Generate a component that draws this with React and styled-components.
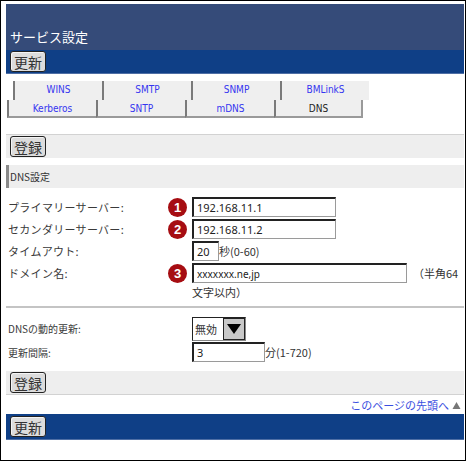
import React from "react";
import styled, { createGlobalStyle } from "styled-components";

const GlobalStyle = createGlobalStyle`
  html, body {
    margin: 0;
    padding: 0;
    background: #ffffff;
  }
  body {
    font-family: "Noto Sans CJK JP", "DejaVu Sans", sans-serif;
  }
`;

const TABS_TOP = ["WINS", "SMTP", "SNMP", "BMLinkS"];
const TABS_BOTTOM = ["Kerberos", "SNTP", "mDNS", "DNS"];

function App() {
  return (
    <>
      <GlobalStyle />
      <Frame>
        <Header>
          <Title>サービス設定</Title>
        </Header>
        <BlueBand>
          <PlainButton>更新</PlainButton>
        </BlueBand>

        <Tabs>
          <TabRow offset={7}>
            {TABS_TOP.map((t) => (
              <Tab key={t}>{t}</Tab>
            ))}
          </TabRow>
          <TabRow offset={1} bottom>
            {TABS_BOTTOM.map((t) => (
              <Tab key={t} active={t === "DNS"} bottom>
                {t}
              </Tab>
            ))}
          </TabRow>
        </Tabs>

        <ActionBar top>
          <PlainButton>登録</PlainButton>
        </ActionBar>

        <SectionTitle>DNS設定</SectionTitle>

        <Form>
          <Row>
            <Label>プライマリーサーバー:</Label>
            <BadgeCell>
              <Badge>1</Badge>
            </BadgeCell>
            <TextInput width={144} defaultValue="192.168.11.1" />
          </Row>
          <Row>
            <Label>セカンダリーサーバー:</Label>
            <BadgeCell>
              <Badge>2</Badge>
            </BadgeCell>
            <TextInput width={144} defaultValue="192.168.11.2" />
          </Row>
          <Row>
            <Label>タイムアウト:</Label>
            <BadgeCell />
            <TextInput width={27} defaultValue="20" />
            <Unit>秒(0-60)</Unit>
          </Row>
          <Row tall>
            <Label>ドメイン名:</Label>
            <BadgeCell>
              <Badge>3</Badge>
            </BadgeCell>
            <TextInput width={215} small defaultValue="xxxxxxx.ne,jp" />
            <Note>（半角64</Note>
          </Row>
          <Wrapped>文字以内）</Wrapped>
        </Form>

        <Rule />

        <Form>
          <Row select>
            <Label small>DNSの動的更新:</Label>
            <BadgeCell />
            <Select>
              <SelectValue>無効</SelectValue>
              <SelectArrow>
                <svg width="14" height="10" viewBox="0 0 14 10">
                  <polygon points="0,0 14,0 7,10" fill="#000" />
                </svg>
              </SelectArrow>
            </Select>
          </Row>
          <Row>
            <Label small>更新間隔:</Label>
            <BadgeCell />
            <TextInput width={73} defaultValue="3" />
            <Unit>分(1-720)</Unit>
          </Row>
        </Form>

        <ActionBar bottomLine>
          <PlainButton>登録</PlainButton>
        </ActionBar>

        <TopLinkRow>
          <TopLink href="#top">このページの先頭へ</TopLink>
          <svg width="9" height="8" viewBox="0 0 9 8">
            <polygon points="4.5,1 8.5,8 0.5,8" fill="#777" />
          </svg>
        </TopLinkRow>

        <BlueBand tall>
          <PlainButton>更新</PlainButton>
        </BlueBand>
      </Frame>
    </>
  );
}

const Frame = styled.div`
  box-sizing: border-box;
  width: 466px;
  height: 461px;
  border: 1px solid #000;
  padding: 3px 1px 0 5px;
  background: #fff;
  overflow: hidden;
`;

const Header = styled.div`
  height: 46px;
  background: #354b79;
  display: flex;
  align-items: flex-end;
  padding: 0 0 4px 4px;
  box-sizing: border-box;
`;

const Title = styled.div`
  color: #ffffff;
  font-size: 13px;
  line-height: 18px;
`;

const BlueBand = styled.div`
  height: ${(p) => (p.tall ? 26 : 24)}px;
  background: #0f3f86;
  border-bottom: 1px solid #4f6fa5;
  box-sizing: border-box;
  display: flex;
  align-items: center;
  padding-left: 4px;
`;

const PlainButton = styled.button`
  font-family: "Noto Sans CJK JP", sans-serif;
  font-size: 14px;
  line-height: 16px;
  height: 21px;
  padding: 0 3px;
  background: #dcdcdc;
  color: #333;
  border: 1.5px solid #222;
  border-radius: 3px;
  box-shadow: inset 1px 1px 0 #f4f4f4;
  cursor: pointer;
`;

const Tabs = styled.div`
  margin-top: 7px;
`;

const TabRow = styled.div`
  display: flex;
  margin-left: ${(p) => p.offset}px;
`;

const Tab = styled.div`
  width: 89px;
  height: ${(p) => (p.bottom ? 18 : 19)}px;
  box-sizing: border-box;
  background: #efefef;
  border-left: 2px solid #7a7a7a;
  border-bottom: ${(p) => (p.bottom ? "2px solid #9a9a9a" : "none")};
  border-right: ${(p) => (p.active ? "2px solid #9a9a9a" : "none")};
  color: ${(p) => (p.active ? "#222" : "#3535f0")};
  font-family: "DejaVu Sans Condensed", "DejaVu Sans", sans-serif;
  font-size: 10px;
  line-height: 17px;
  text-align: center;
`;

const ActionBar = styled.div`
  margin-top: ${(p) => (p.top ? 16 : 8)}px;
  height: 23px;
  background: #eeeeee;
  border-top: ${(p) => (p.top ? "1px solid #d2d2d2" : "none")};
  border-bottom: ${(p) => (p.bottomLine ? "1px solid #d2d2d2" : "none")};
  display: flex;
  align-items: center;
  padding-left: 4px;
`;

const SectionTitle = styled.div`
  margin-top: 7px;
  height: 23px;
  background: #eeeeee;
  border-left: 3px solid #8a8a8a;
  box-sizing: border-box;
  font-size: 10px;
  color: #333;
  line-height: 23px;
  padding-left: 1px;
`;

const Form = styled.div`
  padding-top: 8px;
`;

const Row = styled.div`
  display: flex;
  align-items: center;
  height: ${(p) => (p.select ? 25 : 22)}px;
`;

const Label = styled.div`
  width: 162px;
  padding-left: 2px;
  box-sizing: border-box;
  font-size: ${(p) => (p.small ? 10 : 11)}px;
  color: #3a3a3a;
  letter-spacing: ${(p) => (p.small ? 0 : 0.3)}px;
`;

const BadgeCell = styled.div`
  width: 24px;
  display: flex;
  justify-content: flex-start;
`;

const Badge = styled.div`
  width: 19px;
  height: 19px;
  border-radius: 50%;
  background: #a60d12;
  color: #fff;
  font-family: "Liberation Sans", sans-serif;
  font-size: 13px;
  font-weight: bold;
  display: flex;
  align-items: center;
  justify-content: center;
`;

const TextInput = styled.input`
  box-sizing: border-box;
  width: ${(p) => p.width}px;
  height: 20px;
  padding: 0 3px;
  border: 2px solid #222;
  border-right-color: #9a9a9a;
  border-bottom-color: #9a9a9a;
  border-right-width: 1px;
  border-bottom-width: 1px;
  font-family: "Noto Sans", sans-serif;
  font-size: ${(p) => (p.small ? 10 : 11)}px;
  color: #222;
  background: #fff;
  outline: none;
`;

const Unit = styled.span`
  font-size: 11px;
  color: #333;
`;

const Note = styled.span`
  margin-left: 6px;
  font-size: 11px;
  color: #333;
`;

const Wrapped = styled.div`
  margin-left: 186px;
  font-size: 11px;
  color: #333;
  line-height: 16px;
`;

const Rule = styled.div`
  margin-top: 6px;
  height: 2px;
  background: #c4c4c4;
`;

const Select = styled.div`
  display: flex;
  height: 24px;
  box-sizing: border-box;
  border: 1px solid #222;
  border-right-color: #888;
  border-bottom-color: #888;
`;

const SelectValue = styled.div`
  width: 28px;
  background: #fff;
  font-size: 11px;
  color: #333;
  display: flex;
  align-items: center;
  padding-left: 2px;
`;

const SelectArrow = styled.div`
  width: 20px;
  background: #c8c8c8;
  border: 1px solid #222;
  display: flex;
  align-items: center;
  justify-content: center;
`;

const TopLinkRow = styled.div`
  height: 19px;
  display: flex;
  align-items: center;
  justify-content: flex-end;
  gap: 3px;
  padding-right: 3px;
`;

const TopLink = styled.a`
  font-size: 11px;
  color: #3a4fe0;
  text-decoration: none;
`;

export default App;
